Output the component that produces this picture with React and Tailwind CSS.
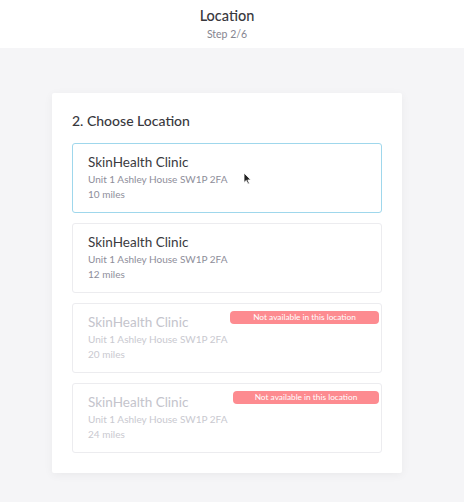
import React from "react";

const locations = [
  { miles: "10 miles", selected: true, disabled: false },
  { miles: "12 miles", selected: false, disabled: false },
  { miles: "20 miles", selected: false, disabled: true, badgeW: "w-[149px]" },
  { miles: "24 miles", selected: false, disabled: true, badgeW: "w-[146px]" },
];

function Cursor() {
  return (
    <svg
      className="absolute left-[170px] top-[28px]"
      width="9"
      height="13"
      viewBox="0 0 9 13"
    >
      <path d="M1 1 L1 10.5 L3.3 8.4 L5 12 L6.4 11.4 L4.8 7.9 L7.8 7.9 Z" fill="#222" stroke="#fff" strokeWidth="0.8" />
    </svg>
  );
}

function LocationCard({ miles, selected, disabled, badgeW }) {
  return (
    <div
      className={
        "relative h-[70px] rounded-[3px] bg-white px-[15px] pt-[9px] " +
        (selected
          ? "border-[1.5px] border-[#9fd7ec]"
          : "border border-[#ececef]")
      }
    >
      <div
        className={
          "text-[13.5px] leading-[19px] " +
          (disabled ? "text-[#c4c4cc]" : "text-[#3a3a40]")
        }
      >
        SkinHealth Clinic
      </div>
      <div
        className={
          "text-[10px] leading-[15px] " +
          (disabled ? "text-[#c9c9d0]" : "text-[#8e8e9a]")
        }
      >
        Unit 1 Ashley House SW1P 2FA
      </div>
      <div
        className={
          "text-[10px] leading-[15px] " +
          (disabled ? "text-[#c9c9d0]" : "text-[#8e8e9a]")
        }
      >
        {miles}
      </div>
      {disabled && (
        <div
          className={
            "absolute right-[2px] top-[7px] flex h-[13px] items-center justify-center rounded-[4px] bg-[#fd8b90] text-[8.3px] leading-none text-white " +
            badgeW
          }
        >
          Not available in this location
        </div>
      )}
      {selected && <Cursor />}
    </div>
  );
}

export default function App() {
  return (
    <div
      className="flex min-h-[502px] flex-col bg-[#f5f5f7]"
      style={{ fontFamily: "Lato, 'Open Sans', sans-serif" }}
    >
      <header className="flex h-[48px] flex-col items-center bg-white pr-[10px] pt-[6px]">
        <div className="text-[14.5px] font-medium leading-[20px] text-[#38383d]">
          Location
        </div>
        <div className="mt-[1px] text-[10.5px] leading-[14px] text-[#85858f]">
          Step 2/6
        </div>
      </header>
      <div className="flex justify-center pr-[10px] pt-[45px]">
        <div className="w-[350px] rounded-[2px] bg-white px-[20px] pb-[20px] pt-[20px] shadow-[0_2px_10px_rgba(0,0,0,0.05)]">
          <h2 className="mb-[14px] text-[14px] font-medium leading-[16px] text-[#38383d]">
            2. Choose Location
          </h2>
          <div className="flex flex-col gap-[10px]">
            {locations.map((l, i) => (
              <LocationCard key={i} {...l} />
            ))}
          </div>
        </div>
      </div>
    </div>
  );
}
